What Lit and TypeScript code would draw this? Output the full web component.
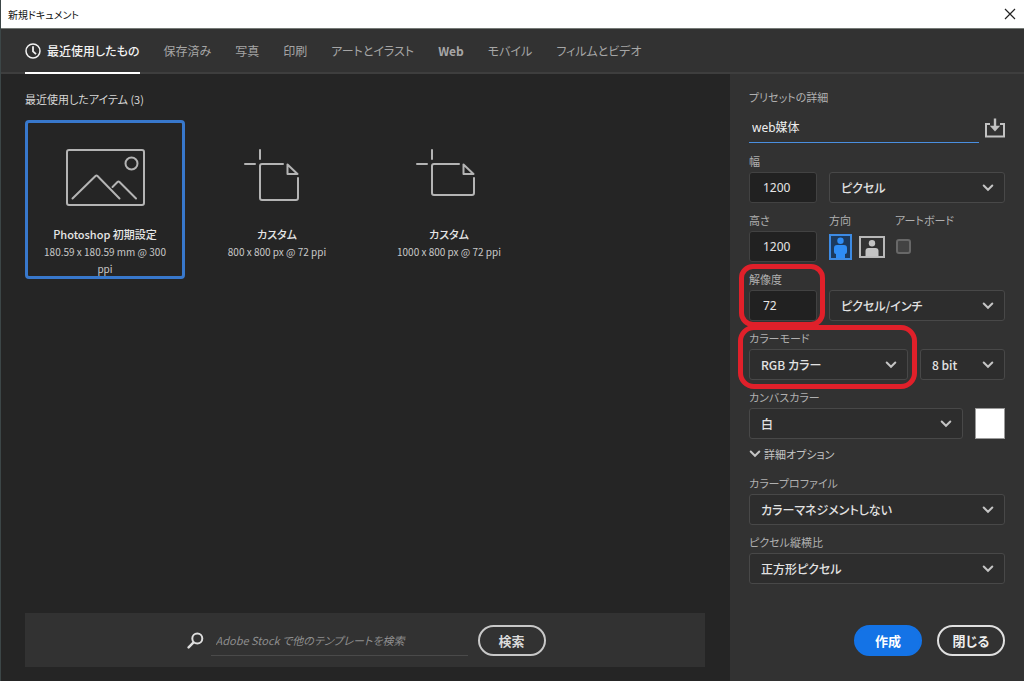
import { LitElement, html, css, svg, nothing } from "lit";
import { customElement, property, state } from "lit/decorators.js";
import { classMap } from "lit/directives/class-map.js";

const chevron = html`<svg class="chevron" width="12" height="8" viewBox="0 0 12 8" aria-hidden="true">
  <path d="M1.7 1.5 L6 5.8 L10.3 1.5" fill="none" stroke="currentColor" stroke-width="2" stroke-linecap="round" />
</svg>`;

const shared = css`
  * { box-sizing: border-box; }
  button, input, select {
    font: inherit;
    font-feature-settings: inherit;
    color: inherit;
    margin: 0;
    padding: 0;
    border: 0;
    background: none;
  }
  svg { display: block; flex: none; }
`;

@customElement("select-box")
export class SelectBox extends LitElement {
  @property() label = "";
  @property() value = "";
  @property({ type: Boolean }) marked = false;

  static styles = [shared, css`
    :host { display: block; min-width: 0; }
    .field { display: grid; gap: 2px; position: relative; }
    .caption { font-size: 11px; line-height: 18px; height: 18px; color: #b0b0b0; white-space: nowrap; }
    .box { display: grid; align-items: center; }
    .control {
      grid-area: 1 / 1;
      appearance: none;
      width: 100%;
      height: 31px;
      padding: 0 30px 0 11px;
      border: 1px solid #484848;
      border-radius: 3px;
      background: #2d2d2d;
      color: #e2e2e2;
      font-size: 12px;
      font-weight: 500;
    }
    .chevron { grid-area: 1 / 1; justify-self: end; margin-right: 11px; color: #c4c4c4; pointer-events: none; }
    .marked::after {
      content: "";
      position: absolute;
      inset: -4px -9px -9px -11px;
      border: 5px solid #e0202a;
      border-radius: 16px;
      pointer-events: none;
    }
  `];

  render() {
    return html`<div class=${classMap({ field: true, marked: this.marked })}>
      <label class="caption" for="control">${this.label}</label>
      <div class="box">
        <select class="control" id="control" aria-label=${this.label || "単位"}>
          <option>${this.value}</option>
        </select>
        ${chevron}
      </div>
    </div>`;
  }
}

@customElement("number-box")
export class NumberBox extends LitElement {
  @property() label = "";
  @property() value = "";
  @property({ type: Boolean }) marked = false;

  static styles = [shared, css`
    :host { display: block; min-width: 0; }
    .field { display: grid; gap: 2px; position: relative; }
    .caption { font-size: 11px; line-height: 18px; height: 18px; color: #b0b0b0; }
    .control {
      width: 100%;
      height: 31px;
      padding: 0 13px;
      border: 1px solid #424242;
      border-radius: 3px;
      background: #212121;
      color: #e6e6e6;
      font-family: "Noto Sans", sans-serif;
      font-size: 12px;
    }
    .marked::after {
      content: "";
      position: absolute;
      inset: -6px -8px -6px -10px;
      border: 5px solid #e0202a;
      border-radius: 14px;
      pointer-events: none;
    }
  `];

  render() {
    return html`<div class=${classMap({ field: true, marked: this.marked })}>
      <label class="caption" for="control">${this.label}</label>
      <input class="control" id="control" type="text" .value=${this.value} />
    </div>`;
  }
}

const pictureArt = svg`
  <rect x="1" y="1" width="77" height="55" rx="2" />
  <circle cx="65.5" cy="14.5" r="6" />
  <path d="M6.5 49.5 L29.5 27 Q30.5 26 31.5 27 L53.5 49.5" />
  <path d="M46.5 38 L51.5 33 Q52.5 32 53.5 33 L70 49.5" />`;

const squareArt = svg`
  <path d="M17 1 V10 M2 15 H12" />
  <path d="M40 15 H19 Q17 15 17 17 V49 Q17 51 19 51 H53 Q55 51 55 49 V29" />
  <path d="M44.5 15.5 V25 H54.5 Z" />`;

const wideArt = svg`
  <path d="M17 1 V10 M2 15 H12" />
  <path d="M44 15 H19 Q17 15 17 17 V44 Q17 46 19 46 H57 Q59 46 59 44 V29" />
  <path d="M48.5 15.5 V25 H58.5 Z" />`;

const presets = [
  { title: "Photoshop 初期設定", size: "180.59 x 180.59 mm @ 300 ppi", art: pictureArt, w: 79, h: 57 },
  { title: "カスタム", size: "800 x 800 px @ 72 ppi", art: squareArt, w: 68, h: 57 },
  { title: "カスタム", size: "1000 x 800 px @ 72 ppi", art: wideArt, w: 68, h: 57 },
];

const tabs = ["最近使用したもの", "保存済み", "写真", "印刷", "アートとイラスト", "Web", "モバイル", "フィルムとビデオ"];

@customElement("app-root")
export class AppRoot extends LitElement {
  @state() tab = 0;
  @state() preset = 0;

  static styles = [shared, css`
    :host {
      display: flex;
      flex-direction: column;
      min-height: 100vh;
      border-left: 1px solid #3c4647;
      background: #252525;
      color: #d6d6d6;
      font-family: "Noto Sans CJK JP", sans-serif;
      font-size: 13px;
      font-feature-settings: "palt";
      box-sizing: border-box;
    }
    .titlebar {
      display: flex;
      justify-content: space-between;
      align-items: center;
      height: 28px;
      padding: 0 8px 0 7px;
      background: #fff;
      color: #111;
    }
    .title { margin: 0; font-size: 10px; font-weight: 400; }
    .tabs {
      display: flex;
      gap: 24px;
      height: 46px;
      padding: 0 24px;
      background: #323232;
      border-top: 1px solid #757a76;
      border-bottom: 2px solid #3e3e3e;
    }
    .tab {
      display: flex;
      align-items: center;
      gap: 6px;
      height: 45px;
      color: #a6a6a6;
      white-space: nowrap;
      font-size: 12px;
      font-weight: 400;
      border-bottom: 2px solid transparent;
    }
    .tab.latin { font-weight: 700; }
    .tab.active { color: #f2f2f2; border-color: #fff; font-weight: 500; }
    .body { flex: 1; display: grid; grid-template-columns: minmax(0, 1fr) 294px; }
    .main { display: flex; flex-direction: column; padding: 15px 25px 14px 24px; }
    .heading { margin: 0 0 11px; font-size: 11px; line-height: 20px; font-weight: 400; }
    .cards { display: flex; gap: 12px; }
    .card {
      display: flex;
      flex-direction: column;
      align-items: center;
      width: 160px;
      height: 159px;
      padding: 26px 12px 0;
      border: 3px solid transparent;
      border-radius: 4px;
      font-size: 11px;
      line-height: 18px;
      text-align: center;
    }
    .card.active { border-color: #3878cc; }
    .art { margin-bottom: 19px; fill: none; stroke: #b4b4b4; stroke-width: 2; stroke-linecap: round; stroke-linejoin: round; }
    .name { color: #e6e6e6; font-weight: 500; white-space: nowrap; }
    .size { color: #c8c8c8; font-size: 10px; line-height: 17px; }
    .search {
      display: flex;
      justify-content: center;
      align-items: center;
      height: 54px;
      margin-top: auto;
      padding-left: 2px;
      background: #323232;
    }
    .query {
      flex: 0 1 257px;
      min-width: 0;
      height: 32px;
      margin: 0 10px 0 7px;
      padding: 0 5px;
      border-bottom: 1px solid #4a4a4a;
      font-size: 11px;
      font-style: italic;
    }
    .query::placeholder { color: #8e8e8e; opacity: 1; }
    .pill {
      width: 68px;
      height: 31px;
      border: 2px solid #c8c8c8;
      border-radius: 16px;
      color: #dcdcdc;
      font-weight: 700;
      white-space: nowrap;
    }
    .pill.primary { border-color: #1473e6; background: #1473e6; color: #fff; }
    .pill.strong { border-color: #e0e0e0; color: #eee; }
    .panel { display: flex; flex-direction: column; padding: 14px 19px 25px; background: #323232; }
    .label { margin: 0; font-size: 11px; line-height: 18px; font-weight: 400; color: #b0b0b0; }
    .row { display: grid; gap: 12px; }
    .fields { display: grid; gap: 8px; }
    .namerow { grid-template-columns: minmax(0, 1fr) 20px; gap: 6px; align-items: center; margin: 6px 0 9px; }
    .docname { width: 100%; height: 31px; padding: 0 3px; border-bottom: 1px solid #4a8fe0; color: #eee; font-size: 12px; font-family: "Noto Sans", "Noto Sans CJK JP", sans-serif; }
    .unit { grid-template-columns: 68px minmax(0, 1fr); }
    .mode { grid-template-columns: minmax(0, 1fr) 85px; }
    .canvas { grid-template-columns: minmax(0, 1fr) 30px; align-items: end; }
    .orient { grid-template-columns: 68px 54px minmax(0, 1fr); }
    .group { display: grid; grid-template-rows: 18px 31px; gap: 2px; margin: 0; padding: 0; border: 0; min-width: 0; }
    .choices { display: flex; align-items: center; gap: 7px; }
    .choice { display: grid; }
    .choice > * { grid-area: 1 / 1; }
    .hidden { appearance: none; width: 100%; height: 100%; }
    .artboard { appearance: none; align-self: center; width: 15px; height: 15px; margin-left: 1px; border: 2px solid #686868; border-radius: 3px; background: #434343; }
    .swatch { height: 31px; border: 1px solid #9a9a9a; background: #fff; }
    .toggle { display: flex; align-items: center; gap: 3px; margin: 6px 0 11px; color: #c4c4c4; font-size: 11px; line-height: 18px; }
    .actions { display: flex; justify-content: flex-end; gap: 15px; margin-top: auto; }
  `];

  render() {
    return html`
      <header class="titlebar">
        <h1 class="title">新規ドキュメント</h1>
        <button aria-label="ウィンドウを閉じる">
          <svg width="12" height="12" viewBox="0 0 12 12"><path d="M1 1 L11 11 M11 1 L1 11" stroke="#222" stroke-width="1.2" /></svg>
        </button>
      </header>
      <nav class="tabs">
        ${tabs.map((name, i) => html`
          <button class=${classMap({ tab: true, active: this.tab === i, latin: name === "Web" })} @click=${() => (this.tab = i)}>
            ${i === 0 ? html`<svg width="16" height="16" viewBox="0 0 16 16" fill="none" stroke="currentColor">
              <circle cx="8" cy="8" r="7" stroke-width="1.5" /><path d="M8 3.2 V8.3 L11 11.2" stroke-width="1.8" />
            </svg>` : nothing}${name}
          </button>`)}
      </nav>
      <div class="body">
        <main class="main">
          <h2 class="heading">最近使用したアイテム (3)</h2>
          <div class="cards">
            ${presets.map((p, i) => html`
              <button class=${classMap({ card: true, active: this.preset === i })} @click=${() => (this.preset = i)}>
                <svg class="art" width=${p.w} height=${p.h} viewBox="0 0 ${p.w} ${p.h}">${p.art}</svg>
                <span class="name">${p.title}</span>
                <span class="size">${p.size}</span>
              </button>`)}
          </div>
          <form class="search" @submit=${(e: Event) => e.preventDefault()}>
            <svg width="17" height="17" viewBox="0 0 17 17" fill="none" stroke="#dedede" stroke-linecap="round">
              <circle cx="10.3" cy="6.5" r="5" stroke-width="2" /><path d="M6.3 10.6 L1.6 15.4" stroke-width="2.4" />
            </svg>
            <input class="query" type="text" aria-label="テンプレートを検索" placeholder="Adobe Stock で他のテンプレートを検索" />
            <button class="pill">検索</button>
          </form>
        </main>
        <aside class="panel">
          <label class="label" for="docname">プリセットの詳細</label>
          <div class="row namerow">
            <input class="docname" id="docname" type="text" .value=${"web媒体"} />
            <button aria-label="プリセットを保存">
              <svg width="20" height="20" viewBox="0 0 20 20" fill="none" stroke="#c2c2c2" stroke-width="2">
                <path d="M5 6 H1 V18.5 H19 V6 H15" /><path d="M10 0.5 V9" stroke-width="2.4" /><path d="M4.8 7.8 H15.2 L10 13.6 Z" fill="#c2c2c2" stroke="none" />
              </svg>
            </button>
          </div>
          <div class="fields">
            <div class="row unit">
              <number-box label="幅" value="1200"></number-box>
              <select-box value="ピクセル"></select-box>
            </div>
            <div class="row orient">
              <number-box label="高さ" value="1200"></number-box>
              <div class="group" role="radiogroup" aria-labelledby="direction">
                <span class="label" id="direction">方向</span>
                <div class="choices">
                  <label class="choice">
                    <input class="hidden" type="radio" name="direction" aria-label="縦" checked />
                    <svg width="23" height="26" viewBox="0 0 23 26">
                      <rect x="1" y="1" width="21" height="24" fill="#1c3a5e" stroke="#3d8be4" stroke-width="2" />
                      <circle cx="11.5" cy="6.7" r="3.2" fill="#2f8df5" />
                      <path d="M8 11 H15 Q18 11 18 14 V18 Q18 20 16 20 V24 H7 V20 Q5 20 5 18 V14 Q5 11 8 11 Z" fill="#2f8df5" />
                    </svg>
                  </label>
                  <label class="choice">
                    <input class="hidden" type="radio" name="direction" aria-label="横" />
                    <svg width="26" height="22" viewBox="0 0 26 22">
                      <rect x="1" y="1" width="24" height="20" fill="none" stroke="#b8b8b8" stroke-width="2" />
                      <circle cx="13" cy="7.2" r="3.2" fill="#c4c4c4" />
                      <path d="M6.5 20.5 V15 Q6.5 12 9.5 12 H16.5 Q19.5 12 19.5 15 V20.5 Z" fill="#c4c4c4" />
                    </svg>
                  </label>
                </div>
              </div>
              <div class="group">
                <label class="label" for="artboard">アートボード</label>
                <input class="artboard" id="artboard" type="checkbox" />
              </div>
            </div>
            <div class="row unit">
              <number-box label="解像度" value="72" marked></number-box>
              <select-box value="ピクセル/インチ"></select-box>
            </div>
            <div class="row mode">
              <select-box label="カラーモード" value="RGB カラー" marked></select-box>
              <select-box value="8 bit"></select-box>
            </div>
            <div class="row canvas">
              <select-box label="カンバスカラー" value="白"></select-box>
              <button class="swatch" aria-label="カンバスカラーを選択"></button>
            </div>
          </div>
          <button class="toggle">${chevron}詳細オプション</button>
          <div class="fields">
            <select-box label="カラープロファイル" value="カラーマネジメントしない"></select-box>
            <select-box label="ピクセル縦横比" value="正方形ピクセル"></select-box>
          </div>
          <div class="actions">
            <button class="pill primary">作成</button>
            <button class="pill strong">閉じる</button>
          </div>
        </aside>
      </div>`;
  }
}
